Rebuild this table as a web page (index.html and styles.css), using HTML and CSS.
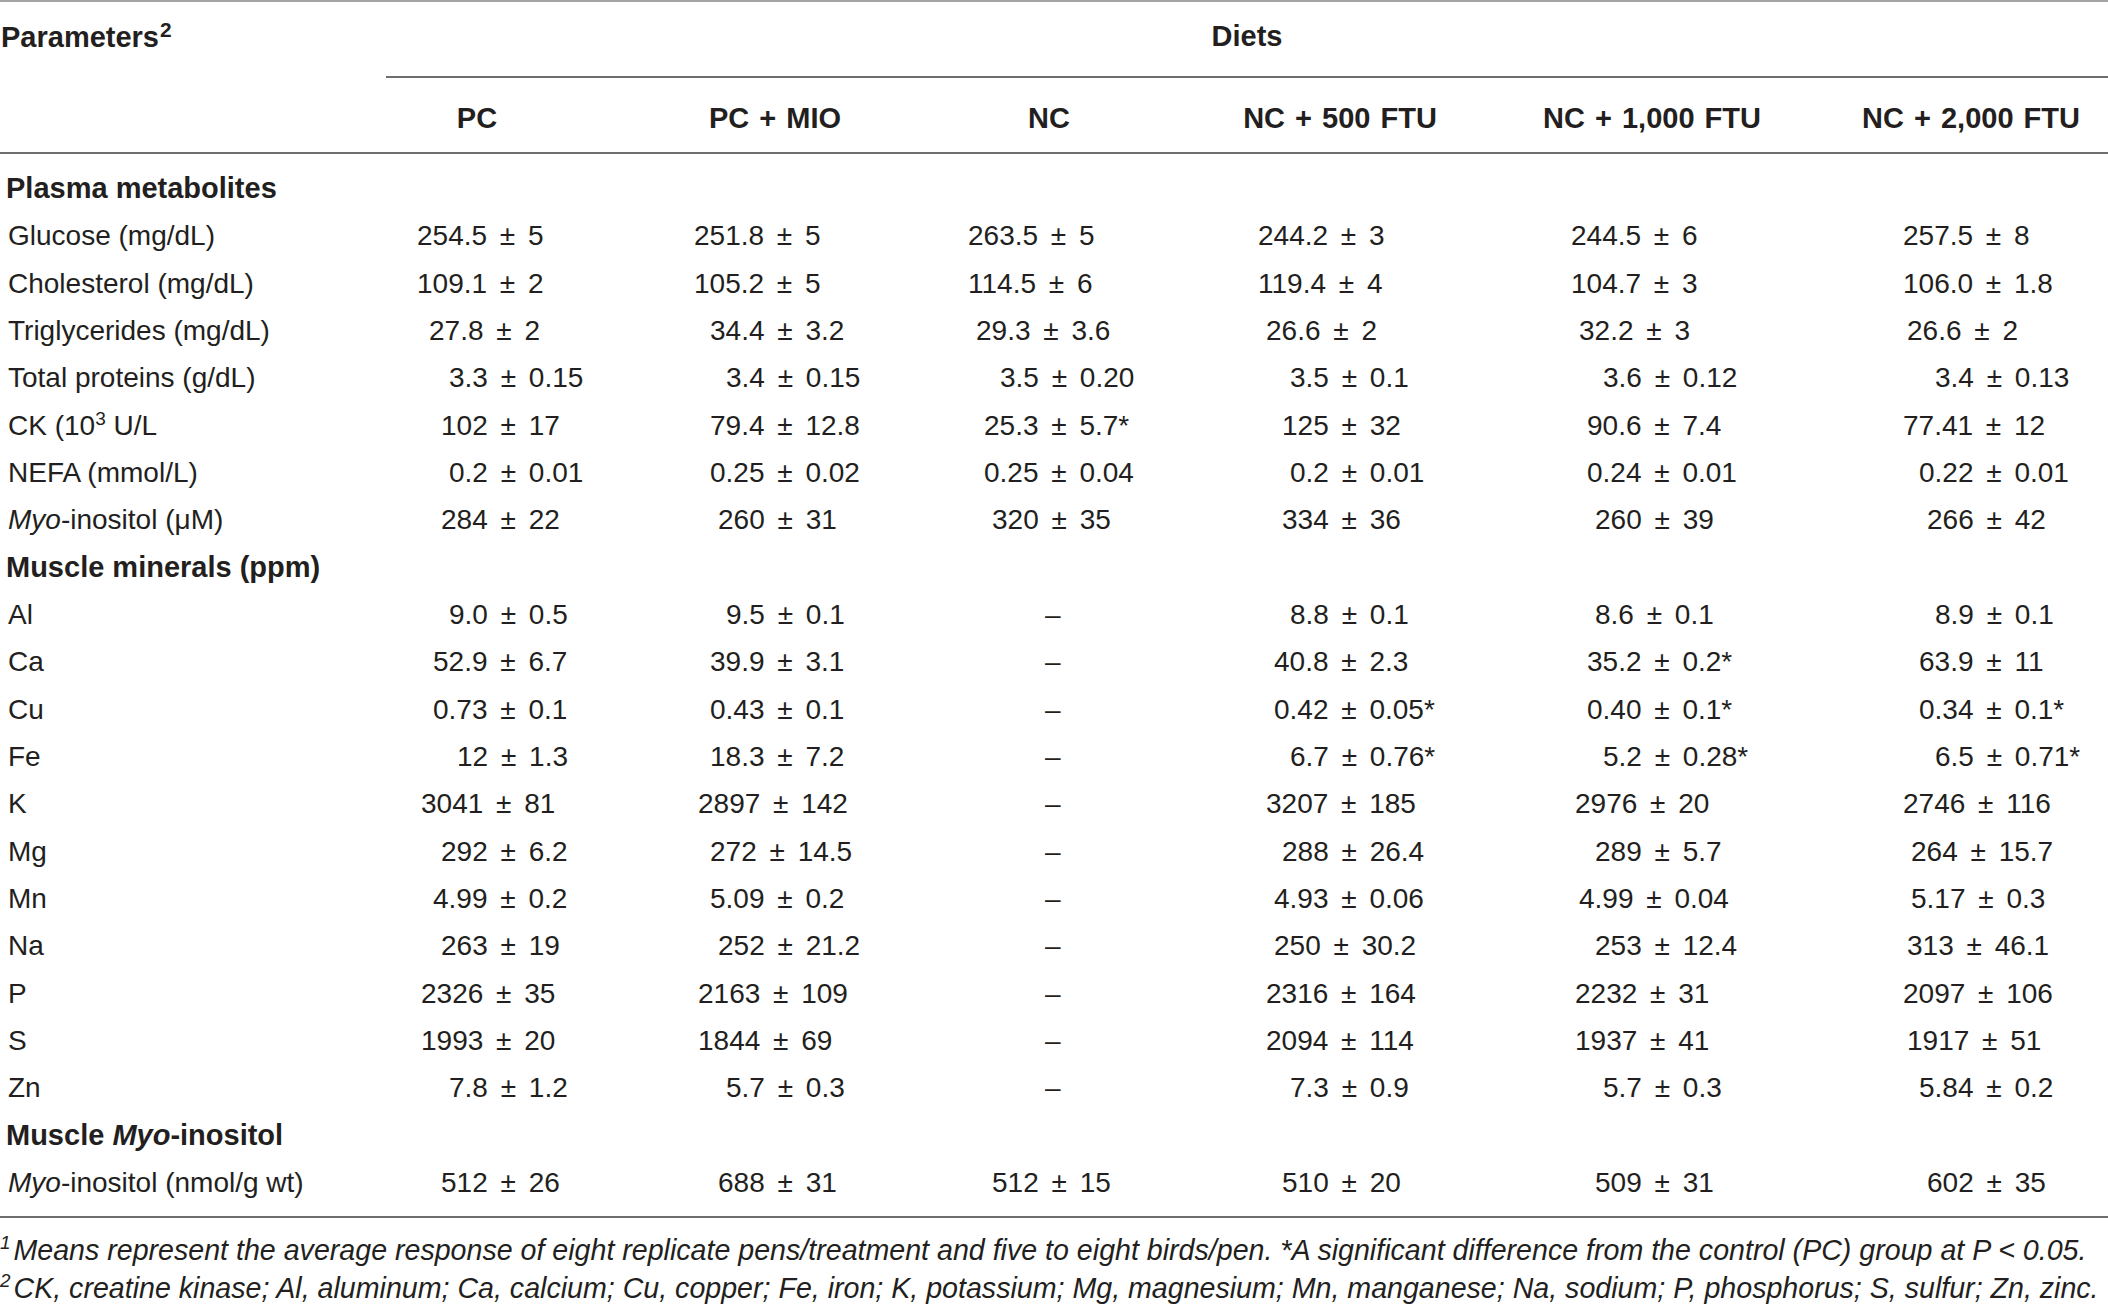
FILE: index.html
```html
<!DOCTYPE html>
<html>
<head>
<meta charset="utf-8">
<title>Table</title>
<link rel="stylesheet" href="styles.css">
</head>
<body>
<div class="page">
<table class="t">
<colgroup><col class="c0"><col class="c1"><col class="c2"><col class="c3"><col class="c4"><col class="c5"><col class="c6"></colgroup>
<thead>
<tr class="h1"><th class="param">Parameters<sup>2</sup></th><th class="diets" colspan="6">Diets</th></tr>
<tr class="h2"><th></th><th>PC</th><th>PC + MIO</th><th>NC</th><th>NC + 500 FTU</th><th>NC + 1,000 FTU</th><th>NC + 2,000 FTU</th></tr>
</thead>
<tbody>
<tr class="sec first"><td colspan="7">Plasma metabolites</td></tr>
<tr><td>Glucose (mg/dL)</td><td>254.5 ± 5</td><td>251.8 ± 5</td><td>263.5 ± 5</td><td>244.2 ± 3</td><td>244.5 ± 6</td><td>257.5 ± 8</td></tr>
<tr><td>Cholesterol (mg/dL)</td><td>109.1 ± 2</td><td>105.2 ± 5</td><td>114.5 ± 6</td><td>119.4 ± 4</td><td>104.7 ± 3</td><td>106.0 ± 1.8</td></tr>
<tr><td>Triglycerides (mg/dL)</td><td class="i12">27.8 ± 2</td><td class="i16">34.4 ± 3.2</td><td class="i8">29.3 ± 3.6</td><td class="i8">26.6 ± 2</td><td class="i8">32.2 ± 3</td><td class="i4">26.6 ± 2</td></tr>
<tr><td>Total proteins (g/dL)</td><td class="i32">3.3 ± 0.15</td><td class="i32">3.4 ± 0.15</td><td class="i32">3.5 ± 0.20</td><td class="i32">3.5 ± 0.1</td><td class="i32">3.6 ± 0.12</td><td class="i32">3.4 ± 0.13</td></tr>
<tr><td>CK (10<sup>3</sup> U/L</td><td class="i24">102 ± 17</td><td class="i16">79.4 ± 12.8</td><td class="i16">25.3 ± 5.7*</td><td class="i24">125 ± 32</td><td class="i16">90.6 ± 7.4</td><td>77.41 ± 12</td></tr>
<tr><td>NEFA (mmol/L)</td><td class="i32">0.2 ± 0.01</td><td class="i16">0.25 ± 0.02</td><td class="i16">0.25 ± 0.04</td><td class="i32">0.2 ± 0.01</td><td class="i16">0.24 ± 0.01</td><td class="i16">0.22 ± 0.01</td></tr>
<tr><td><i>Myo</i>-inositol (μM)</td><td class="i24">284 ± 22</td><td class="i24">260 ± 31</td><td class="i24">320 ± 35</td><td class="i24">334 ± 36</td><td class="i24">260 ± 39</td><td class="i24">266 ± 42</td></tr>
<tr class="sec"><td colspan="7">Muscle minerals (ppm)</td></tr>
<tr><td>Al</td><td class="i32">9.0 ± 0.5</td><td class="i32">9.5 ± 0.1</td><td class="na">–</td><td class="i32">8.8 ± 0.1</td><td class="i24">8.6 ± 0.1</td><td class="i32">8.9 ± 0.1</td></tr>
<tr><td>Ca</td><td class="i16">52.9 ± 6.7</td><td class="i16">39.9 ± 3.1</td><td class="na">–</td><td class="i16">40.8 ± 2.3</td><td class="i16">35.2 ± 0.2*</td><td class="i16">63.9 ± 11</td></tr>
<tr><td>Cu</td><td class="i16">0.73 ± 0.1</td><td class="i16">0.43 ± 0.1</td><td class="na">–</td><td class="i16">0.42 ± 0.05*</td><td class="i16">0.40 ± 0.1*</td><td class="i16">0.34 ± 0.1*</td></tr>
<tr><td>Fe</td><td class="i40">12 ± 1.3</td><td class="i16">18.3 ± 7.2</td><td class="na">–</td><td class="i32">6.7 ± 0.76*</td><td class="i32">5.2 ± 0.28*</td><td class="i32">6.5 ± 0.71*</td></tr>
<tr><td>K</td><td class="i4">3041 ± 81</td><td class="i4">2897 ± 142</td><td class="na">–</td><td class="i8">3207 ± 185</td><td class="i4">2976 ± 20</td><td>2746 ± 116</td></tr>
<tr><td>Mg</td><td class="i24">292 ± 6.2</td><td class="i16">272 ± 14.5</td><td class="na">–</td><td class="i24">288 ± 26.4</td><td class="i24">289 ± 5.7</td><td class="i8">264 ± 15.7</td></tr>
<tr><td>Mn</td><td class="i16">4.99 ± 0.2</td><td class="i16">5.09 ± 0.2</td><td class="na">–</td><td class="i16">4.93 ± 0.06</td><td class="i8">4.99 ± 0.04</td><td class="i8">5.17 ± 0.3</td></tr>
<tr><td>Na</td><td class="i24">263 ± 19</td><td class="i24">252 ± 21.2</td><td class="na">–</td><td class="i16">250 ± 30.2</td><td class="i24">253 ± 12.4</td><td class="i4">313 ± 46.1</td></tr>
<tr><td>P</td><td class="i4">2326 ± 35</td><td class="i4">2163 ± 109</td><td class="na">–</td><td class="i8">2316 ± 164</td><td class="i4">2232 ± 31</td><td>2097 ± 106</td></tr>
<tr><td>S</td><td class="i4">1993 ± 20</td><td class="i4">1844 ± 69</td><td class="na">–</td><td class="i8">2094 ± 114</td><td class="i4">1937 ± 41</td><td class="i4">1917 ± 51</td></tr>
<tr><td>Zn</td><td class="i32">7.8 ± 1.2</td><td class="i32">5.7 ± 0.3</td><td class="na">–</td><td class="i32">7.3 ± 0.9</td><td class="i32">5.7 ± 0.3</td><td class="i16">5.84 ± 0.2</td></tr>
<tr class="sec"><td colspan="7">Muscle <i>Myo</i>-inositol</td></tr>
<tr class="last"><td><i>Myo</i>-inositol (nmol/g wt)</td><td class="i24">512 ± 26</td><td class="i24">688 ± 31</td><td class="i24">512 ± 15</td><td class="i24">510 ± 20</td><td class="i24">509 ± 31</td><td class="i24">602 ± 35</td></tr>
</tbody>
</table>
<div class="notes">
<p><sup>1</sup>Means represent the average response of eight replicate pens/treatment and five to eight birds/pen. *A significant difference from the control (PC) group at P &lt; 0.05.</p>
<p><sup>2</sup>CK, creatine kinase; Al, aluminum; Ca, calcium; Cu, copper; Fe, iron; K, potassium; Mg, magnesium; Mn, manganese; Na, sodium; P, phosphorus; S, sulfur; Zn, zinc.</p>
</div>
</div>
</body>
</html>
```

FILE: styles.css
```css
html, body {
  margin: 0;
  padding: 0;
  background: #ffffff;
}

body {
  font-family: "Liberation Sans", Arial, sans-serif;
  color: #231f20;
}

.page {
  width: 2108px;
}

.t {
  width: 2108px;
  table-layout: fixed;
  border-collapse: separate;
  border-spacing: 0;
  border-top: 2px solid #a3a3a3;
}

.c0 { width: 386px; }
.c1 { width: 274px; }
.c2 { width: 270px; }
.c3 { width: 270px; }
.c4 { width: 300px; }
.c5 { width: 330px; }
.c6 { width: 278px; }

th, td {
  padding: 0;
  white-space: nowrap;
  vertical-align: middle;
}

th {
  font-weight: bold;
  font-size: 29px;
  text-align: center;
}

.h1 th {
  line-height: 68px;
  padding-bottom: 6px;
}

.h1 .param {
  text-align: left;
  padding-left: 1px;
}

.h1 .param sup {
  font-size: 72%;
  vertical-align: 0.5em;
  margin-left: 1px;
}

.h1 .diets {
  border-bottom: 2px solid #6e6e6e;
}

.h2 th {
  line-height: 68px;
  padding-top: 6px;
  border-bottom: 2px solid #6e6e6e;
  word-spacing: 2px;
}

.h2 th:nth-child(2) { padding-right: 92px; }
.h2 th:nth-child(3) { padding-right: 40px; }
.h2 th:nth-child(4) { padding-right: 32px; }
.h2 th:nth-child(5) { padding-right: 20px; }
.h2 th:nth-child(6) { padding-right: 26px; }
.h2 th:nth-child(7) { padding-left: 4px; }

sup {
  font-size: 68%;
  line-height: 0;
  vertical-align: 0.55em;
}

td {
  font-size: 28px;
  line-height: 47.33px;
  text-align: left;
  padding-left: calc(var(--b, 0px) + var(--i, 0px));
  word-spacing: 5px;
}

td:first-child {
  --b: 8px;
  word-spacing: 0;
}

td:nth-child(2) { --b: 31px; }
td:nth-child(3) { --b: 34px; }
td:nth-child(4) { --b: 38px; }
td:nth-child(5) { --b: 58px; }
td:nth-child(6) { --b: 71px; }
td:nth-child(7) { --b: 73px; }

.i4 { --i: 4px; }
.i8 { --i: 8px; }
.i12 { --i: 12px; }
.i16 { --i: 16px; }
.i24 { --i: 24px; }
.i32 { --i: 32px; }
.i40 { --i: 40px; }
.na { --i: 77px; }

.sec td {
  font-weight: bold;
  font-size: 29px;
  --b: 6px;
  word-spacing: 0;
}

.first td {
  padding-top: 11px;
}

.last td {
  padding-bottom: 10px;
  border-bottom: 2px solid #6e6e6e;
}

.notes {
  padding-top: 13px;
  font-style: italic;
  font-size: 28.6px;
}

.notes p {
  margin: 0;
  line-height: 38px;
  white-space: nowrap;
}

.notes sup {
  font-size: 66%;
  vertical-align: 0.6em;
  margin-right: 3px;
}
```
